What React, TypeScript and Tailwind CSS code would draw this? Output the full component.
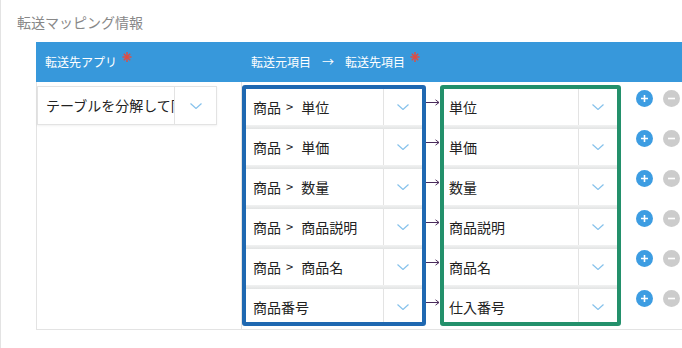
import React from 'react';

const SRC: [string, string | null][] = [
  ['商品', '単位'],
  ['商品', '単価'],
  ['商品', '数量'],
  ['商品', '商品説明'],
  ['商品', '商品名'],
  ['商品番号', null],
];
const DST = ['単位', '単価', '数量', '商品説明', '商品名', '仕入番号'];

const Chevron: React.FC = () => (
  <svg width="12" height="6" viewBox="0 0 12 6" fill="none">
    <path d="M0.5 0.5L6 5.5L11.5 0.5" stroke="#86c2ec" strokeWidth="1.2" />
  </svg>
);

const Asterisk: React.FC = () => (
  <svg width="10" height="10" viewBox="0 0 10 10" className="self-start mt-[10px] ml-[5px]">
    <g stroke="#e8493b" strokeWidth="1.4">
      <path d="M5 0V10" />
      <path d="M0.5 5H9.5" />
      <path d="M1.8 1.8L8.2 8.2" />
      <path d="M8.2 1.8L1.8 8.2" />
    </g>
  </svg>
);

const BoxRow: React.FC<{ pad: string; children: React.ReactNode }> = ({ pad, children }) => (
  <div className="h-[40px] flex flex-col shrink-0">
    <div className="h-[36px] flex bg-white">
      <div className={`flex-1 flex items-center ${pad} text-[14px] text-[#222] whitespace-nowrap overflow-hidden`}>{children}</div>
      <div className="w-[39px] border-l border-[#e3e3e3] flex items-center justify-center">
        <Chevron />
      </div>
    </div>
    <div className="h-[4px] bg-gradient-to-b from-[#f1f2f2] to-[#e2e4e4]" />
  </div>
);

const App: React.FC = () => {
  return (
    <div
      className="w-[682px] h-[348px] overflow-hidden bg-white border-l border-[#e3e3e3]"
      style={{ fontFamily: '"Noto Sans CJK JP", "Noto Sans", sans-serif' }}
    >
      <div className="pl-[16px] pt-[12px] mb-[10px] text-[14px] leading-[20px] text-[#888]">転送マッピング情報</div>

      <div className="ml-[35px]">
        {/* header */}
        <div className="h-[40px] bg-[#3798db] flex text-white text-[12px]">
          <div className="w-[205px] flex items-center pl-[9px]">
            <span>転送先アプリ</span>
            <Asterisk />
          </div>
          <div className="flex items-center pl-[10px]">
            <span>転送元項目</span>
            <span className="mx-[11px]">→</span>
            <span>転送先項目</span>
            <Asterisk />
          </div>
        </div>

        {/* body */}
        <div className="h-[248px] flex border-l border-b border-[#e3e3e3]">
          <div className="w-[204px] pt-[4px]">
            <div className="w-[180px] h-[39px] flex border border-[#e3e3e3] shadow-[0_1px_2px_rgba(0,0,0,0.06)] bg-white">
              <div className="w-[136px] flex items-center pl-[8px] text-[14px] text-[#222] whitespace-nowrap overflow-hidden">
                テーブルを分解して同期
              </div>
              <div className="flex-1 border-l border-[#e3e3e3] flex items-center justify-center">
                <Chevron />
              </div>
            </div>
          </div>

          <div className="flex border-l border-[#e3e3e3]">
            <div className="mt-[3px] w-[184px] h-[241px] border-4 border-[#1f68b1] rounded-[3px] overflow-hidden bg-white flex flex-col">
              {SRC.map(([a, b]) => (
                <BoxRow key={a + b} pad="pl-[7px]">
                  <span>{a}</span>
                  {b && (
                    <>
                      <span className="ml-[5px] mr-[8px] text-[13px]">&gt;</span>
                      <span>{b}</span>
                    </>
                  )}
                </BoxRow>
              ))}
            </div>

            <div className="w-[14px] flex flex-col">
              {SRC.map(([a, b]) => (
                <div key={a + b} className="h-[40px] shrink-0 flex items-start pt-[17px]">
                  <svg width="14" height="7" viewBox="0 0 14 7" fill="none">
                    <path d="M0 3.5H13" stroke="#4a2b5c" strokeWidth="1" />
                    <path d="M9.5 0.8L13 3.5L9.5 6.2" stroke="#4a2b5c" strokeWidth="1" />
                  </svg>
                </div>
              ))}
            </div>

            <div className="mt-[3px] w-[181px] h-[241px] border-4 border-[#23906b] rounded-[3px] overflow-hidden bg-white flex flex-col">
              {DST.map((s) => (
                <BoxRow key={s} pad="pl-[5px]">
                  {s}
                </BoxRow>
              ))}
            </div>

            <div className="flex flex-col pl-[15px]">
              {DST.map((s) => (
                <div key={s} className="h-[40px] shrink-0 flex items-start pt-[8px] gap-[10px]">
                  <div className="w-[17px] h-[17px] rounded-full bg-[#3d9de2] flex items-center justify-center">
                    <svg width="9" height="9" viewBox="0 0 9 9">
                      <path d="M4.5 1V8M1 4.5H8" stroke="white" strokeWidth="1.6" />
                    </svg>
                  </div>
                  <div className="w-[17px] h-[17px] rounded-full bg-[#cccccc] flex items-center justify-center">
                    <svg width="9" height="9" viewBox="0 0 9 9">
                      <path d="M1 4.5H8" stroke="white" strokeWidth="1.6" />
                    </svg>
                  </div>
                </div>
              ))}
            </div>
          </div>
        </div>
      </div>
    </div>
  );
};

export default App;
